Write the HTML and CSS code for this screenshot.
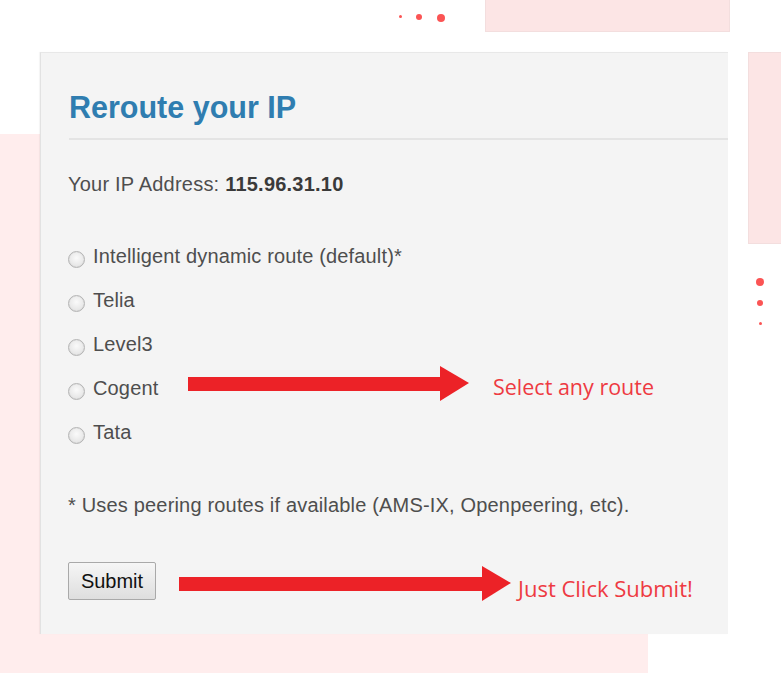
FILE: index.html
```html
<!DOCTYPE html>
<html>
<head>
<meta charset="utf-8">
<link rel="stylesheet" href="styles.css">
</head>
<body>
<div class="stage">
  <div class="decor pink-top"></div>
  <div class="decor pink-right"></div>
  <div class="decor pink-left"></div>
  <div class="decor pink-bottom"></div>
  <span class="dot d1"></span><span class="dot d2"></span><span class="dot d3"></span>
  <span class="dot d4"></span><span class="dot d5"></span><span class="dot d6"></span>

  <section class="panel">
    <h1 class="title">Reroute your IP</h1>
    <p class="ip">Your IP Address: <b>115.96.31.10</b></p>
    <ul class="routes">
      <li><span class="radio"></span>Intelligent dynamic route (default)*</li>
      <li><span class="radio"></span>Telia</li>
      <li><span class="radio"></span>Level3</li>
      <li><span class="radio"></span>Cogent</li>
      <li><span class="radio"></span>Tata</li>
    </ul>
    <p class="note">* Uses peering routes if available (AMS-IX, Openpeering, etc).</p>
    <button class="submit" type="button">Submit</button>

    <div class="annot a1">
      <svg width="282" height="36" viewBox="0 0 282 36"><rect x="0" y="11" width="254" height="14" fill="#ec2227"/><polygon points="252,0 281,17 252,35" fill="#ec2227"/></svg>
      <span class="annot-text">Select any route</span>
    </div>
    <div class="annot a2">
      <svg width="333" height="36" viewBox="0 0 333 36"><rect x="0" y="11" width="305" height="14" fill="#ec2227"/><polygon points="303,0 332,17 303,35" fill="#ec2227"/></svg>
      <span class="annot-text">Just Click Submit!</span>
    </div>
  </section>
</div>
</body>
</html>
```
FILE: styles.css
```css
html, body {
  margin: 0;
  padding: 0;
  background: #fff;
}
.stage {
  position: relative;
  width: 781px;
  height: 673px;
  overflow: hidden;
  font-family: "Liberation Sans", Arial, sans-serif;
}
.decor { position: absolute; }
.pink-top {
  left: 485px; top: 0; width: 243px; height: 31px;
  background: #fce5e5;
  border: 1px solid #f3dede;
  border-top: none;
}
.pink-right {
  left: 748px; top: 52px; width: 33px; height: 190px;
  background: #fce5e5;
  border: 1px solid #f3dede;
  border-right: none;
}
.pink-left {
  left: 0; top: 134px; width: 40px; height: 500px;
  background: #ffeded;
}
.pink-bottom {
  left: 0; top: 634px; width: 648px; height: 39px;
  background: #ffeded;
}
.dot {
  position: absolute;
  border-radius: 50%;
  background: #fb5454;
}
.d1 { left: 399px; top: 15px; width: 3px; height: 3px; }
.d2 { left: 416px; top: 14px; width: 6px; height: 6px; }
.d3 { left: 437px; top: 14px; width: 8px; height: 8px; }
.d4 { left: 756px; top: 278px; width: 8px; height: 8px; }
.d5 { left: 757px; top: 300px; width: 6px; height: 6px; }
.d6 { left: 759px; top: 322px; width: 3px; height: 3px; }

.panel {
  position: relative;
  margin: 52px 0 0 40px;
  width: 688px;
  height: 582px;
  background: #f4f4f4;
  border-top: 1px solid #e8e8e8;
  border-left: 1px solid #e2e2e2;
  box-shadow: -1px 0 1px rgba(0,0,0,0.04);
  padding-top: 37px;
  box-sizing: border-box;
  color: #4e4e4e;
}
.title {
  margin: 0 0 0 28px;
  padding-bottom: 13px;
  border-bottom: 2px solid #e4e4e4;
  font-size: 30.5px;
  line-height: 35px;
  font-weight: bold;
  color: #2f7db0;
}
.ip {
  margin: 32px 0 0 27px;
  font-size: 20px;
  line-height: 24px;
  letter-spacing: 0.22px;
}
.ip b { color: #3a3a3a; }
.routes {
  list-style: none;
  margin: 48px 0 0 27px;
  padding: 0;
  display: flex;
  flex-direction: column;
  gap: 20px;
  font-size: 20px;
  line-height: 24px;
  letter-spacing: 0.15px;
}
.routes li {
  display: flex;
  align-items: center;
  gap: 8px;
}
.radio {
  width: 15px;
  height: 15px;
  margin-top: 6px;
  border-radius: 50%;
  border: 1px solid #b4b4b4;
  background: radial-gradient(circle at 50% 40%, #fafafa 0%, #e6e6e6 70%, #d8d8d8 100%);
  box-shadow: inset 0 0 1px rgba(0,0,0,0.15);
  flex: none;
}
.note {
  margin: 49px 0 0 27px;
  font-size: 20px;
  line-height: 24px;
  letter-spacing: 0.18px;
}
.submit {
  display: block;
  margin: 45px 0 0 27px;
  width: 88px;
  height: 38px;
  font-family: "Liberation Sans", Arial, sans-serif;
  font-size: 20px;
  color: #111;
  border: 1px solid #a9a9a9;
  border-radius: 2px;
  background: linear-gradient(#f6f6f6, #dedede);
  padding: 0;
}
.annot {
  position: absolute;
  display: flex;
  align-items: center;
}
.annot svg { display: block; flex: none; }
.a1 { left: 147px; top: 313px; }
.a2 { left: 138px; top: 511px; }
.annot-text {
  font-family: "Open Sans", sans-serif;
  font-size: 21.5px;
  color: #ee3a42;
  margin-top: 5px;
}
.a1 .annot-text { margin-left: 23px; }
.a2 .annot-text { margin-left: 6px; font-size: 22px; margin-top: 9px; }
```
